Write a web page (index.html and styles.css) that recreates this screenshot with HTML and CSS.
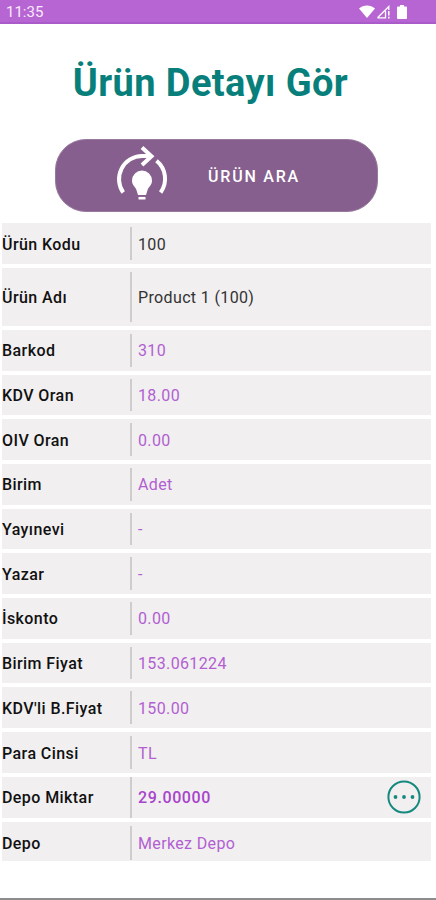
FILE: index.html
```html
<!DOCTYPE html>
<html lang="tr">
<head>
    <meta charset="UTF-8">
    <title>Ürün Detayı Gör</title>
    <link rel="stylesheet" href="styles.css">
</head>
<body>
    <div class="screen">
        <div class="statusbar">
            <span class="time">11:35</span>
            <div class="status-icons">
                <svg class="wifi" viewBox="0 0 16 13"><path d="M0 3.600C4.500-.6 11.500-.6 16 3.600L8 13z" fill="#fff"/></svg>
                <svg class="signal" viewBox="0 0 15 14"><path d="M1.500 12.800L12.800 1.500V5M1.500 12.800H9.500V6" fill="none" stroke="#fff" stroke-width="1.300"/><path d="M12.800 6v4.500M12.800 11.800v1.600" stroke="#fff" stroke-width="1.500"/></svg>
                <svg class="battery" viewBox="0 0 10 14"><path d="M3 0h4v1.500h2q1 0 1 1V13q0 1-1 1H1q-1 0-1-1V2.500q0-1 1-1h2z" fill="#fff"/></svg>
            </div>
        </div>

        <h1>Ürün Detayı Gör</h1>

        <button class="search-btn">
            <svg class="search-icon" viewBox="0 0 54 56" fill="none" stroke="#fff" stroke-width="4">
                <path d="M8.200 47.500A23.300 23.300 0 0 1 27 10.900H36"/>
                <path d="M27 2.500L36.500 11.200L27 20"/>
                <path d="M41.500 15.700A23.300 23.300 0 0 1 45.600 47.500"/>
                <path d="M27 25.500a10 10 0 0 1 10 10c0 4-2.500 6-4 8.200l-2 6.300h-8l-2-6.300c-1.500-2.200-4-4.200-4-8.200a10 10 0 0 1 10-10z" fill="#fff" stroke="none"/>
                <path d="M23.500 53.200h7" stroke-width="2.600"/>
            </svg>
            <span>ÜRÜN ARA</span>
        </button>

        <div class="list">
            <div class="row dark"><p class="label">Ürün Kodu</p><p class="value">100</p></div>
            <div class="row dark tall"><p class="label">Ürün Adı</p><p class="value">Product 1 (100)</p></div>
            <div class="row"><p class="label">Barkod</p><p class="value">310</p></div>
            <div class="row"><p class="label">KDV Oran</p><p class="value">18.00</p></div>
            <div class="row"><p class="label">OIV Oran</p><p class="value">0.00</p></div>
            <div class="row"><p class="label">Birim</p><p class="value">Adet</p></div>
            <div class="row"><p class="label">Yayınevi</p><p class="value">-</p></div>
            <div class="row"><p class="label">Yazar</p><p class="value">-</p></div>
            <div class="row"><p class="label">İskonto</p><p class="value">0.00</p></div>
            <div class="row"><p class="label">Birim Fiyat</p><p class="value">153.061224</p></div>
            <div class="row"><p class="label">KDV'li B.Fiyat</p><p class="value">150.00</p></div>
            <div class="row"><p class="label">Para Cinsi</p><p class="value">TL</p></div>
            <div class="row stock">
                <p class="label">Depo Miktar</p>
                <p class="value">29.00000</p>
                <svg class="more" viewBox="0 0 34 34">
                    <circle cx="17" cy="17" r="15.600" fill="none" stroke="#16897f" stroke-width="2"/>
                    <g fill="#16897f"><circle cx="8.500" cy="17" r="1.900"/><circle cx="17" cy="17" r="1.900"/><circle cx="25.500" cy="17" r="1.900"/></g>
                </svg>
            </div>
            <div class="row last"><p class="label">Depo</p><p class="value">Merkez Depo</p></div>
        </div>
    </div>
</body>
</html>
```
FILE: styles.css
```css
*{
    box-sizing: border-box;
    margin: 0;
    padding: 0;
}
body{
    background: #fff;
    font-family: Roboto, sans-serif;
}
.screen{
    display: flex;
    flex-direction: column;
    height: 900px;
    overflow: hidden;
    border-bottom: 2px solid #8c8c8c;
}
.statusbar{
    display: flex;
    justify-content: space-between;
    align-items: center;
    height: 24px;
    padding: 0 29px 0 6px;
    background: #b665d3;
    border-bottom: 2px solid #a95bc9;
    color: #fbeaff;
}
.time{
    font-size: 15px;
    line-height: 22px;
    padding-top: 2px;
}
.status-icons{
    display: flex;
    align-items: center;
    padding-top: 1px;
}
.wifi{
    width: 16px;
    height: 13px;
}
.signal{
    width: 15px;
    height: 14px;
    margin: 0 6px 0 1px;
}
.battery{
    width: 10px;
    height: 14px;
}
h1{
    margin-top: 35px;
    padding-right: 15px;
    text-align: center;
    font-size: 38px;
    font-weight: 700;
    line-height: 48px;
    letter-spacing: .4px;
    color: #087f7b;
}
.search-btn{
    display: flex;
    align-items: center;
    width: 323px;
    height: 73px;
    margin: 32px 0 0 55px;
    padding-left: 59px;
    border: 1px solid #987a9e;
    border-radius: 31px;
    background: #865f8e;
    color: #fff;
    font-family: Roboto, sans-serif;
    font-size: 16px;
    font-weight: 500;
    letter-spacing: 1.8px;
}
.search-btn span{
    padding-top: 1px;
}
.search-icon{
    width: 54px;
    height: 56px;
    margin: 0 39px 6px 0;
}
.list{
    display: flex;
    flex-direction: column;
    gap: 4px;
    margin: 11.300px 5px 0 2px;
}
.row{
    display: flex;
    align-items: center;
    height: 40.700px;
    padding: 4px 0;
    background: #f1eff0;
    font-size: 16px;
}
.tall{
    height: 58px;
}
.label{
    width: 128px;
    padding-top: 1px;
    font-weight: 500;
    letter-spacing: .42px;
    color: #111;
}
.value{
    display: flex;
    align-items: center;
    align-self: stretch;
    flex: 1;
    padding: 1px 0 0 6px;
    border-left: 2px solid #cecccd;
    letter-spacing: .36px;
    color: #b25fd2;
}
.dark .value{
    color: #333;
}
.stock{
    padding: 0 10px 0 0;
}
.stock .value{
    font-weight: 500;
    letter-spacing: .6px;
    color: #a844cb;
}
.more{
    width: 34px;
    height: 34px;
}
.last{
    height: 39px;
    padding-bottom: 1px;
}
```
